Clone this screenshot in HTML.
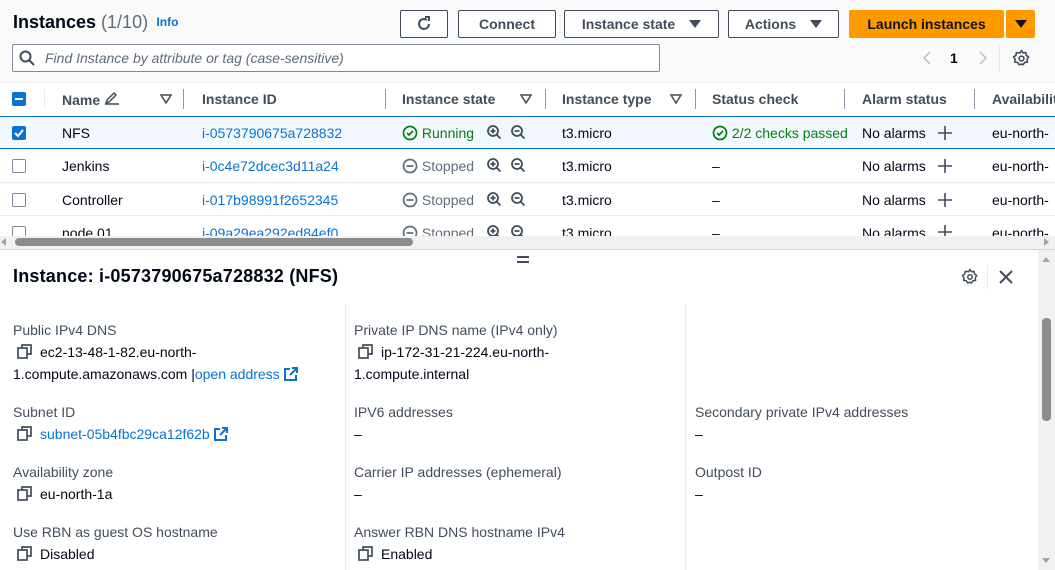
<!DOCTYPE html>
<html><head><meta charset="utf-8"><style>
*{box-sizing:border-box;margin:0;padding:0}
body{width:1055px;height:570px;overflow:hidden;background:#fff;font-family:"Liberation Sans","DejaVu Sans",sans-serif;font-size:14px;color:#000716;position:relative}
.a{position:absolute;white-space:nowrap}
.btn{position:absolute;top:10px;height:28px;border:1px solid #414d5c;border-radius:2px;background:#fff;color:#414d5c;font-weight:bold;font-size:14px;display:flex;align-items:center;justify-content:center;gap:14px}
.tri{width:0;height:0;border-left:6px solid transparent;border-right:6px solid transparent;border-top:8px solid #414d5c;display:inline-block}
.hd{position:absolute;top:91px;font-weight:bold;color:#414d5c}
.sep{position:absolute;top:89px;width:1px;height:20px;background:#8d99a8}
.row{position:absolute;left:0;width:1055px;border-bottom:1px solid #e9ebed}
.cb{position:absolute;left:12px;width:14px;height:14px;border:1.5px solid #7d8998;border-radius:2px;background:#fff}
.lnk{color:#0972d3}
.lbl{position:absolute;color:#414d5c}
.val{position:absolute}
.cp{display:inline-block;vertical-align:-2px;margin-right:8px}
.fsep{position:absolute;top:304px;width:1px;height:266px;background:#e9ebed}
.pl{position:absolute;left:937px}
</style></head><body>
<div class="a" style="left:0;top:0;width:1055px;height:82px;background:#fafafa"></div>
<div class="a" style="left:13px;top:12px;font-size:18px;font-weight:bold">Instances <span style="font-weight:normal;color:#5f6b7a">(1/10)</span> <span style="font-size:12px;color:#0972d3;font-weight:bold;vertical-align:2px">&nbsp;Info</span></div>
<div class="btn" style="left:400px;width:48px"><svg width="18" height="18" viewBox="0 0 18 18"><path d="M14 9a5 5 0 1 1-2-4" fill="none" stroke="#414d5c" stroke-width="2"/><path d="M10 2h4v4" fill="none" stroke="#414d5c" stroke-width="2"/></svg></div>
<div class="btn" style="left:458px;width:98px">Connect</div>
<div class="btn" style="left:564px;width:155px">Instance state <span class="tri"></span></div>
<div class="btn" style="left:728px;width:111px">Actions <span class="tri"></span></div>
<div class="btn" style="left:849px;width:155px;background:#ff9900;border-color:#ff9900;color:#0f141a">Launch instances</div>
<div class="btn" style="left:1006px;width:29px;background:#ff9900;border-color:#ff9900"><span class="tri" style="border-top-color:#0f141a"></span></div>
<div class="a" style="left:12px;top:44px;width:648px;height:28px;border:1px solid #7d8998;border-radius:2px;background:#fff"></div>
<svg class="a" style="left:19px;top:50px" width="16" height="16" viewBox="0 0 16 16"><circle cx="6.5" cy="6.5" r="5" fill="none" stroke="#414d5c" stroke-width="2"/><path d="M10 10l5 5" stroke="#414d5c" stroke-width="2"/></svg>
<div class="a" style="left:45px;top:50px;font-style:italic;color:#5f6b7a">Find Instance by attribute or tag (case-sensitive)</div>
<svg class="a" style="left:920px;top:50px" width="14" height="16"><path d="M10 2L4 8l6 6" fill="none" stroke="#b6bec9" stroke-width="1.5"/></svg>
<div class="a" style="left:950px;top:50px;font-weight:bold">1</div>
<svg class="a" style="left:976px;top:50px" width="14" height="16"><path d="M4 2l6 6-6 6" fill="none" stroke="#b6bec9" stroke-width="1.5"/></svg>
<div class="a" style="left:999px;top:44px;width:1px;height:28px;background:#e9ebed"></div>
<svg class="a" style="left:1012px;top:49px" width="19" height="19" viewBox="0 0 24 24"><path d="M12 2l2 3 3.5-.5.5 3.5 3 2-2 3 .5 3.5-3.5.5-2 3-2-1-3 1-2-3-3.5-.5.5-3.5-2-3 3-2 .5-3.5L10 5z" fill="none" stroke="#414d5c" stroke-width="2" stroke-linejoin="round"/><circle cx="12" cy="12" r="3" fill="none" stroke="#414d5c" stroke-width="2"/></svg>
<div class="a" style="left:0;top:82px;width:1055px;height:35px;border-top:1px solid #e9ebed;border-bottom:1px solid #0972d3;background:#fff"></div>
<div class="a" style="left:12px;top:92px;width:14px;height:14px;background:#0972d3;border-radius:2px"><div style="margin:6px 3px;width:8px;height:2px;background:#fff"></div></div>
<div class="a" style="left:44px;top:89px;width:1px;height:20px;background:#e9ebed"></div>
<div class="hd" style="left:62px">Name <svg width="16" height="14" viewBox="0 0 16 14"><path d="M2 12l1-3 7-7 2 2-7 7z M1 13h14" fill="none" stroke="#414d5c" stroke-width="1.5"/></svg></div>
<svg class="a" style="left:160px;top:94px" width="12" height="10"><path d="M1 1h10L6 9z" fill="none" stroke="#414d5c" stroke-width="1.5"/></svg>
<div class="sep" style="left:183px"></div>
<div class="hd" style="left:202px">Instance ID</div>
<div class="sep" style="left:385px"></div>
<div class="hd" style="left:402px">Instance state</div>
<svg class="a" style="left:520px;top:94px" width="12" height="10"><path d="M1 1h10L6 9z" fill="none" stroke="#414d5c" stroke-width="1.5"/></svg>
<div class="sep" style="left:545px"></div>
<div class="hd" style="left:562px">Instance type</div>
<svg class="a" style="left:670px;top:94px" width="12" height="10"><path d="M1 1h10L6 9z" fill="none" stroke="#414d5c" stroke-width="1.5"/></svg>
<div class="sep" style="left:695px"></div>
<div class="hd" style="left:712px">Status check</div>
<div class="sep" style="left:844px"></div>
<div class="hd" style="left:862px">Alarm status</div>
<div class="sep" style="left:974px"></div>
<div class="hd" style="left:992px">Availability</div>

<div class="row" style="top:117px;height:32px;background:#f2f8fd;border-bottom:1px solid #0972d3"></div>
<div class="row" style="top:150px;height:33px"></div>
<div class="row" style="top:183px;height:33px"></div>

<div class="a" style="left:12px;top:126px;width:14px;height:14px;background:#0972d3;border-radius:2px"><svg width="14" height="14"><path d="M3 7l3 3 5-6" fill="none" stroke="#fff" stroke-width="2"/></svg></div>
<div class="cb" style="top:159px"></div><div class="cb" style="top:193px"></div><div class="cb" style="top:226px"></div>

<div class="a" style="left:62px;top:125px">NFS</div>
<div class="a lnk" style="left:202px;top:125px">i-0573790675a728832</div>
<div class="a" style="left:402px;top:125px;color:#037f0c"><svg width="16" height="16" style="vertical-align:-3px"><circle cx="8" cy="8" r="6.5" fill="none" stroke="#037f0c" stroke-width="1.7"/><path d="M5 8l2 2 4-4" fill="none" stroke="#037f0c" stroke-width="1.7"/></svg> Running</div>
<div class="a" style="left:562px;top:125px">t3.micro</div>
<div class="a" style="left:712px;top:125px;color:#037f0c"><svg width="16" height="16" style="vertical-align:-3px"><circle cx="8" cy="8" r="6.5" fill="none" stroke="#037f0c" stroke-width="1.7"/><path d="M5 8l2 2 4-4" fill="none" stroke="#037f0c" stroke-width="1.7"/></svg> 2/2 checks passed</div>

<div class="a" style="left:62px;top:158px">Jenkins</div>
<div class="a lnk" style="left:202px;top:158px">i-0c4e72dcec3d11a24</div>
<div class="a" style="left:62px;top:192px">Controller</div>
<div class="a lnk" style="left:202px;top:192px">i-017b98991f2652345</div>
<div class="a" style="left:62px;top:225px;height:12px;overflow:hidden">node 01</div>
<div class="a lnk" style="left:202px;top:225px;height:12px;overflow:hidden">i-09a29ea292ed84ef0</div>

<div class="a" style="left:402px;top:158px;color:#5f6b7a"><svg width="16" height="16" style="vertical-align:-3px"><circle cx="8" cy="8" r="6.5" fill="none" stroke="#5f6b7a" stroke-width="1.7"/><path d="M4.5 8h7" stroke="#5f6b7a" stroke-width="1.7"/></svg> Stopped</div>
<div class="a" style="left:402px;top:192px;color:#5f6b7a"><svg width="16" height="16" style="vertical-align:-3px"><circle cx="8" cy="8" r="6.5" fill="none" stroke="#5f6b7a" stroke-width="1.7"/><path d="M4.5 8h7" stroke="#5f6b7a" stroke-width="1.7"/></svg> Stopped</div>
<div class="a" style="left:402px;top:225px;color:#5f6b7a;height:12px;overflow:hidden"><svg width="16" height="16" style="vertical-align:-3px"><circle cx="8" cy="8" r="6.5" fill="none" stroke="#5f6b7a" stroke-width="1.7"/><path d="M4.5 8h7" stroke="#5f6b7a" stroke-width="1.7"/></svg> Stopped</div>

<div class="a" style="left:486px;top:124px;height:113px;width:50px;overflow:hidden">
<svg width="50" height="120"><g id="z" fill="none" stroke="#414d5c" stroke-width="1.8"><circle cx="7" cy="7" r="5"/><path d="M10.5 10.5l4 4M4.5 7h5M7 4.5v5"/><circle cx="31" cy="7" r="5"/><path d="M34.5 10.5l4 4M28.5 7h5"/></g>
<use href="#z" y="33"/><use href="#z" y="67"/><use href="#z" y="100"/></svg></div>

<div class="a" style="left:712px;top:158px">–</div><div class="a" style="left:712px;top:192px">–</div>
<div class="a" style="left:562px;top:158px">t3.micro</div><div class="a" style="left:562px;top:192px">t3.micro</div>
<div class="a" style="left:562px;top:225px;height:12px;overflow:hidden">t3.micro</div>
<div class="a" style="left:712px;top:225px;height:12px;overflow:hidden">–</div>
<div class="a" style="left:862px;top:125px">No alarms</div>
<div class="a" style="left:862px;top:158px">No alarms</div>
<div class="a" style="left:862px;top:192px">No alarms</div>
<div class="a" style="left:862px;top:225px;height:12px;overflow:hidden">No alarms</div>
<svg class="pl" style="top:125px" width="16" height="16"><path d="M8 1v14M1 8h14" stroke="#414d5c" stroke-width="1.6"/></svg>
<svg class="pl" style="top:158px" width="16" height="16"><path d="M8 1v14M1 8h14" stroke="#414d5c" stroke-width="1.6"/></svg>
<svg class="pl" style="top:192px" width="16" height="16"><path d="M8 1v14M1 8h14" stroke="#414d5c" stroke-width="1.6"/></svg>
<div class="a" style="left:937px;top:224px;height:13px;overflow:hidden"><svg width="16" height="16"><path d="M8 1v14M1 8h14" stroke="#414d5c" stroke-width="1.6"/></svg></div>
<div class="a" style="left:992px;top:125px">eu-north-</div>
<div class="a" style="left:992px;top:158px">eu-north-</div>
<div class="a" style="left:992px;top:192px">eu-north-</div>
<div class="a" style="left:992px;top:225px;height:12px;overflow:hidden">eu-north-</div>

<div class="a" style="left:0;top:236px;width:1055px;height:13px;background:#f1f1f1"></div>
<div class="a" style="left:15px;top:238px;width:398px;height:8px;background:#8c8c8c;border-radius:4px"></div>
<div class="a" style="left:1px;top:238px;width:0;height:0;border-top:4px solid transparent;border-bottom:4px solid transparent;border-right:5px solid #a3a3a3"></div>
<div class="a" style="left:1044px;top:238px;width:0;height:0;border-top:4px solid transparent;border-bottom:4px solid transparent;border-left:5px solid #a3a3a3"></div>
<div class="a" style="left:0;top:249px;width:1055px;height:1px;background:#d1d5db"></div>
<div class="a" style="left:517px;top:256px;width:12px;height:2px;background:#414d5c"></div>
<div class="a" style="left:517px;top:261px;width:12px;height:2px;background:#414d5c"></div>

<div class="a" style="left:13px;top:266px;font-size:18px;font-weight:bold;letter-spacing:0.2px">Instance: i-0573790675a728832 (NFS)</div>
<svg class="a" style="left:961px;top:268px" width="18" height="18" viewBox="0 0 24 24"><path d="M12 2l2 3 3.5-.5.5 3.5 3 2-2 3 .5 3.5-3.5.5-2 3-2-1-3 1-2-3-3.5-.5.5-3.5-2-3 3-2 .5-3.5L10 5z" fill="none" stroke="#414d5c" stroke-width="2" stroke-linejoin="round"/><circle cx="12" cy="12" r="3" fill="none" stroke="#414d5c" stroke-width="2"/></svg>
<div class="a" style="left:987px;top:265px;width:1px;height:24px;background:#e9ebed"></div>
<svg class="a" style="left:998px;top:269px" width="16" height="16"><path d="M2 2l12 12M14 2L2 14" stroke="#414d5c" stroke-width="2"/></svg>

<div class="fsep" style="left:345px"></div><div class="fsep" style="left:685px"></div>

<div class="lbl" style="left:13px;top:322px">Public IPv4 DNS</div>
<div class="val" style="left:17px;top:341px;line-height:22px"><svg class="cp" width="15" height="15"><rect x="1" y="4" width="9" height="10" fill="none" stroke="#414d5c" stroke-width="1.7"/><path d="M5 4V1h9v9h-4" fill="none" stroke="#414d5c" stroke-width="1.7"/></svg>ec2-13-48-1-82.eu-north-</div>
<div class="val" style="left:13px;top:363px;line-height:22px">1.compute.amazonaws.com |<span class="lnk">open address</span> <svg width="14" height="14" style="vertical-align:-2px"><path d="M6 2H1v11h11V8M8 1h5v5M13 1L6 8" fill="none" stroke="#0972d3" stroke-width="2"/></svg></div>
<div class="lbl" style="left:13px;top:404px">Subnet ID</div>
<div class="val" style="left:17px;top:426px"><svg class="cp" width="15" height="15"><rect x="1" y="4" width="9" height="10" fill="none" stroke="#414d5c" stroke-width="1.7"/><path d="M5 4V1h9v9h-4" fill="none" stroke="#414d5c" stroke-width="1.7"/></svg><span class="lnk">subnet-05b4fbc29ca12f62b</span> <svg width="14" height="14" style="vertical-align:-2px"><path d="M6 2H1v11h11V8M8 1h5v5M13 1L6 8" fill="none" stroke="#0972d3" stroke-width="2"/></svg></div>
<div class="lbl" style="left:13px;top:464px">Availability zone</div>
<div class="val" style="left:17px;top:486px"><svg class="cp" width="15" height="15"><rect x="1" y="4" width="9" height="10" fill="none" stroke="#414d5c" stroke-width="1.7"/><path d="M5 4V1h9v9h-4" fill="none" stroke="#414d5c" stroke-width="1.7"/></svg>eu-north-1a</div>
<div class="lbl" style="left:13px;top:524px">Use RBN as guest OS hostname</div>
<div class="val" style="left:17px;top:546px"><svg class="cp" width="15" height="15"><rect x="1" y="4" width="9" height="10" fill="none" stroke="#414d5c" stroke-width="1.7"/><path d="M5 4V1h9v9h-4" fill="none" stroke="#414d5c" stroke-width="1.7"/></svg>Disabled</div>

<div class="lbl" style="left:354px;top:322px">Private IP DNS name (IPv4 only)</div>
<div class="val" style="left:358px;top:341px;line-height:22px"><svg class="cp" width="15" height="15"><rect x="1" y="4" width="9" height="10" fill="none" stroke="#414d5c" stroke-width="1.7"/><path d="M5 4V1h9v9h-4" fill="none" stroke="#414d5c" stroke-width="1.7"/></svg>ip-172-31-21-224.eu-north-</div>
<div class="val" style="left:354px;top:363px;line-height:22px">1.compute.internal</div>
<div class="lbl" style="left:354px;top:404px">IPV6 addresses</div>
<div class="val" style="left:354px;top:426px">–</div>
<div class="lbl" style="left:354px;top:464px">Carrier IP addresses (ephemeral)</div>
<div class="val" style="left:354px;top:486px">–</div>
<div class="lbl" style="left:354px;top:524px">Answer RBN DNS hostname IPv4</div>
<div class="val" style="left:358px;top:546px"><svg class="cp" width="15" height="15"><rect x="1" y="4" width="9" height="10" fill="none" stroke="#414d5c" stroke-width="1.7"/><path d="M5 4V1h9v9h-4" fill="none" stroke="#414d5c" stroke-width="1.7"/></svg>Enabled</div>

<div class="lbl" style="left:695px;top:404px">Secondary private IPv4 addresses</div>
<div class="val" style="left:695px;top:426px">–</div>
<div class="lbl" style="left:695px;top:464px">Outpost ID</div>
<div class="val" style="left:695px;top:486px">–</div>

<div class="a" style="left:1038px;top:250px;width:17px;height:320px;background:#f1f1f1"></div>
<div class="a" style="left:1042px;top:318px;width:9px;height:103px;background:#8c8c8c;border-radius:4px"></div>
<div class="a" style="left:1042px;top:257px;width:0;height:0;border-left:4px solid transparent;border-right:4px solid transparent;border-bottom:5px solid #a3a3a3"></div>
<div class="a" style="left:1042px;top:558px;width:0;height:0;border-left:4px solid transparent;border-right:4px solid transparent;border-top:5px solid #a3a3a3"></div>
</body></html>
